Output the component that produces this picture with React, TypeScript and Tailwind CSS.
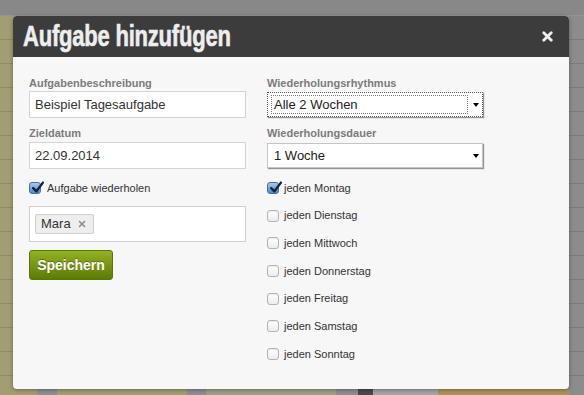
import { X } from 'lucide-react';

const days = ['Montag', 'Dienstag', 'Mittwoch', 'Donnerstag', 'Freitag', 'Samstag', 'Sonntag'];

function Check({ checked }: { checked?: boolean }) {
  if (checked) {
    return (
      <span className="relative flex h-[12px] w-[12px] shrink-0 items-center justify-center rounded-[3px] border border-[#4a6f9e] bg-gradient-to-b from-[#a9c8ef] to-[#4f86cf]">
        <svg viewBox="0 0 12 12" className="absolute -top-[2px] left-[1px] h-[13px] w-[13px]">
          <path d="M2 6.5 L5 9.5 L11 1.5" fill="none" stroke="#15243d" strokeWidth="2.2" strokeLinecap="round" strokeLinejoin="round" />
        </svg>
      </span>
    );
  }
  return <span className="block h-[12px] w-[12px] shrink-0 rounded-[3px] border border-[#b3b3b3] bg-gradient-to-b from-white to-[#ececec] shadow-[inset_0_1px_1px_rgba(0,0,0,0.08)]" />;
}

function Select({ value, focused }: { value: string; focused?: boolean }) {
  return (
    <div
      className={
        'flex h-[25px] w-[216px] items-center border bg-white shadow-[1px_1px_1px_rgba(0,0,0,0.4)] ' +
        (focused ? 'border-dotted border-[#555]' : 'border-[#c4c4c4]')
      }
    >
      <div className={'ml-[3px] flex h-[19px] flex-1 items-center px-[2px] text-[13px] text-[#222] ' + (focused ? 'border border-dotted border-[#777]' : 'border border-transparent')}>
        {value}
      </div>
      <div className="flex w-[14px] items-center justify-center pl-[1px]">
        <span className="block h-0 w-0 border-x-[3px] border-t-[4px] border-x-transparent border-t-black" />
      </div>
    </div>
  );
}

export default function App() {
  const cols = [
    { w: 'w-[37px]', c: 'bg-[#a39e72]' },
    { w: 'w-[20px]', c: 'bg-[#8e8e95]' },
    { w: 'w-[130px]', c: 'bg-[#a39f74]' },
    { w: 'w-[19px]', c: 'bg-[#8e8e95]' },
    { w: 'w-[130px]', c: 'bg-[#9ea08c]' },
    { w: 'w-[22px]', c: 'bg-[#8e8e95]' },
    { w: 'w-[15px]', c: 'bg-[#4b4b4b]' },
    { w: 'w-[65px]', c: 'bg-[#a5a5a7]' },
    { w: 'w-[131px]', c: 'bg-[#a99459]' },
    { w: 'flex-1', c: 'bg-[#8c8c8c]' },
  ];

  return (
    <div className="relative h-[395px] w-[584px] overflow-hidden bg-[#898989] [font-family:'Liberation_Sans',Arial,sans-serif]">
      {/* dimmed calendar behind the dialog */}
      <div className="h-[16px] border-b border-[#959595] bg-[#888]" />
      <div className="flex h-[379px]">
        {cols.map((col, i) => (
          <div
            key={i}
            className={col.w + ' ' + col.c + ' h-full bg-[repeating-linear-gradient(to_bottom,transparent_0,transparent_23px,rgba(0,0,0,0.12)_23px,rgba(0,0,0,0.12)_24px)]'}
          />
        ))}
      </div>

      {/* dialog */}
      <div className="absolute left-[13px] top-[16px] w-[556px] overflow-hidden rounded-[4px] bg-[#f7f7f7] shadow-[0_1px_4px_rgba(0,0,0,0.35)]">
        <div className="flex h-[41px] items-center justify-between bg-[#3c3c3c] pl-[10px] pr-[14px]">
          <h1 className="origin-left scale-x-[0.76] whitespace-nowrap text-[29px] font-bold leading-none tracking-[-0.3px] text-[#eeeeee] [-webkit-text-stroke:0.6px_#eeeeee]">
            Aufgabe hinzufügen
          </h1>
          <X size={15} strokeWidth={4.5} className="text-[#eeeeee]" />
        </div>

        <div className="flex gap-[20px] px-[16px] pb-[21px] pt-[19px]">
          {/* left column */}
          <div className="flex w-[217px] flex-col">
            <label className="text-[11px] font-bold leading-[14px] text-[#7b7b7b]">Aufgabenbeschreibung</label>
            <div className="mt-[1px] flex h-[27px] items-center border border-[#d4d4d4] bg-white px-[5px] text-[13px] text-[#333]">
              Beispiel Tagesaufgabe
            </div>
            <label className="mt-[8px] text-[11px] font-bold leading-[14px] text-[#7b7b7b]">Zieldatum</label>
            <div className="mt-[2px] flex h-[27px] items-center border border-[#d4d4d4] bg-white px-[5px] text-[13px] text-[#333]">
              22.09.2014
            </div>
            <div className="mt-[12px] flex h-[14px] items-center gap-[6px] text-[11px] text-[#333]">
              <Check checked />
              <span>Aufgabe wiederholen</span>
            </div>
            <div className="mt-[11px] flex h-[36px] items-center border border-[#d0d0d0] bg-white px-[5px]">
              <span className="flex h-[20px] items-center gap-[6px] rounded-[2px] border border-[#cfcfcf] bg-[#eeeeee] pl-[5px] pr-[6px] text-[13px] text-[#333]">
                Mara
                <X size={10} strokeWidth={3.5} className="text-[#8a8a8a]" />
              </span>
            </div>
            <button className="mt-[8px] flex h-[30px] w-[84px] items-center justify-center rounded-[3px] border border-[#5b7406] bg-gradient-to-b from-[#93b122] to-[#5c7b04] text-[14px] font-bold text-white [text-shadow:0_-1px_0_rgba(0,0,0,0.3)]">
              Speichern
            </button>
          </div>

          {/* right column */}
          <div className="flex w-[217px] flex-col pl-[1px]">
            <label className="text-[11px] font-bold leading-[14px] text-[#7b7b7b]">Wiederholungsrhythmus</label>
            <div className="mt-[2px]">
              <Select value="Alle 2 Wochen" focused />
            </div>
            <label className="mt-[9px] text-[11px] font-bold leading-[14px] text-[#7b7b7b]">Wiederholungsdauer</label>
            <div className="mt-[3px]">
              <Select value="1 Woche" />
            </div>
            <div className="mt-[6px] flex flex-col">
              {days.map((d, i) => (
                <div key={d} className="flex h-[27.7px] items-center gap-[5px] text-[11px] text-[#333]">
                  <Check checked={i === 0} />
                  <span>jeden {d}</span>
                </div>
              ))}
            </div>
          </div>
        </div>
      </div>
    </div>
  );
}
